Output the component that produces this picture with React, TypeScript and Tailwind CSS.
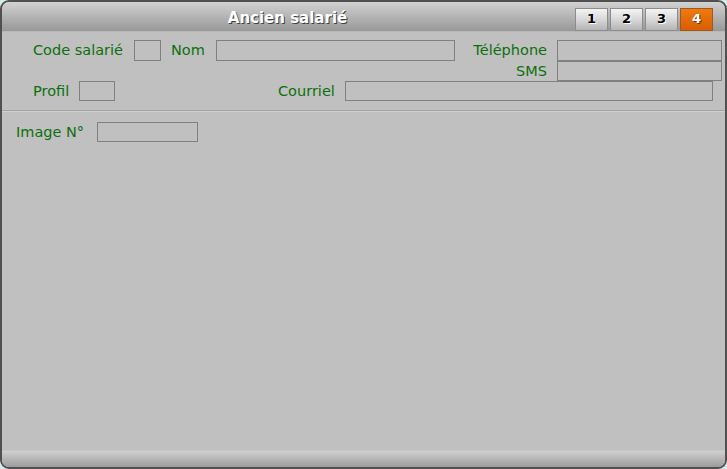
import React from "react";

const font = { fontFamily: '"DejaVu Sans", Verdana, sans-serif' };

function Field({ w, h = 20 }: { w: number; h?: number }) {
  return (
    <div
      className="border border-[#808080] bg-[#c0c0c0] shrink-0"
      style={{ width: w, height: h }}
    />
  );
}

function TabBtn({ n, active }: { n: string; active?: boolean }) {
  return (
    <div
      className={
        "w-[33px] h-[23px] flex items-center justify-center border text-[13px] font-bold " +
        (active
          ? "border-[#9a5a20] bg-gradient-to-b from-[#f07a10] to-[#d85e00] text-white [text-shadow:1px_1px_0_#5a3a20]"
          : "border-[#8c8c8c] bg-gradient-to-b from-[#f4f4f4] via-[#d8d8d8] to-[#b4b4b4] text-black [text-shadow:1px_1px_0_#ffffff]")
      }
    >
      {n}
    </div>
  );
}

export default function App() {
  return (
    <div className="w-[727px] h-[469px] bg-[#d4ecec]" style={font}>
      <div className="w-full h-full rounded-[9px] border-2 border-[#505050] bg-[#c0c0c0] flex flex-col overflow-hidden">
        {/* Title bar */}
        <div className="h-[30px] shrink-0 flex items-center bg-gradient-to-b from-[#d2d2d2] to-[#989898] border-b border-[#b8b8b8]">
          <div className="w-[571px] pt-[3px] text-center text-white font-bold text-[15px] [text-shadow:1px_1px_0_#404040]">
            Ancien salarié
          </div>
          <div className="flex gap-[2px] ml-[2px] mt-[5px]">
            <TabBtn n="1" />
            <TabBtn n="2" />
            <TabBtn n="3" />
            <TabBtn n="4" active />
          </div>
        </div>

        {/* Body */}
        <div className="flex-1 flex flex-col text-[14.5px] text-[#0c700c]">
          <div className="pt-[8px] flex flex-col">
            {/* Row 1 */}
            <div className="flex items-center h-[21px] pl-[31px]">
              <div className="w-[101px] pt-[1px]">Code salarié</div>
              <Field w={27} h={21} />
              <div className="w-[45px] ml-[10px] pt-[1px]">Nom</div>
              <Field w={239} h={21} />
              <div className="w-[92px] text-right pt-[1px]">Téléphone</div>
              <div className="ml-[10px]">
                <Field w={165} h={21} />
              </div>
            </div>
            {/* Row 2 */}
            <div className="flex items-center h-[20px] pl-[31px]">
              <div className="w-[514px] text-right pt-[1px]">SMS</div>
              <div className="ml-[10px]">
                <Field w={165} h={20} />
              </div>
            </div>
            {/* Row 3 */}
            <div className="flex items-center h-[20px] pl-[31px]">
              <div className="w-[46px] pt-[1px]">Profil</div>
              <Field w={36} />
              <div className="w-[67px] ml-[163px] pt-[1px]">Courriel</div>
              <Field w={368} />
            </div>
          </div>

          {/* Separator */}
          <div className="mt-[9px] border-t border-[#a4a4a4] border-b border-b-[#d0d0d0]" />

          {/* Row 4 */}
          <div className="flex items-center h-[20px] pl-[14px] mt-[10px]">
            <div className="w-[81px] pt-[1px]">Image N°</div>
            <Field w={101} />
          </div>
        </div>

        {/* Bottom bar */}
        <div className="h-[17px] shrink-0 bg-gradient-to-b from-[#d0d0d0] to-[#9c9c9c] border-t border-[#c8c8c8]" />
      </div>
    </div>
  );
}
